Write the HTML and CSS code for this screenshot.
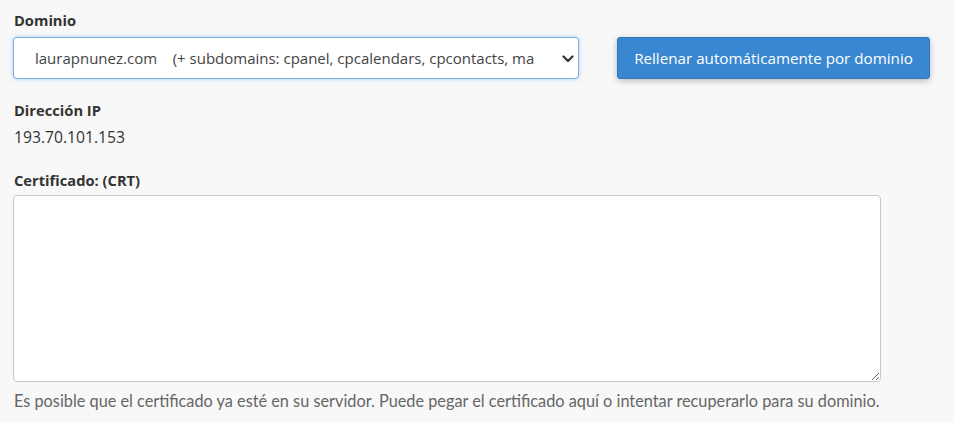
FILE: index.html
```html
<!DOCTYPE html>
<html lang="es">
<head>
<meta charset="utf-8">
<title>Instalar SSL</title>
<link rel="stylesheet" href="styles.css">
</head>
<body>
<form class="form">
  <div class="group">
    <label class="label" for="domain">Dominio</label>
    <div class="row">
      <div class="select-wrap">
        <select id="domain" class="select">
          <option>laurapnunez.com&nbsp;&nbsp;&nbsp;&nbsp;(+ subdomains: cpanel, cpcalendars, cpcontacts, mail, webdisk, webmail, www)</option>
        </select>
        <svg class="chevron" width="12" height="8" viewBox="0 0 12 8" aria-hidden="true"><path d="M1.5 1.5 L6 6 L10.5 1.5" fill="none" stroke="#333" stroke-width="2.2" stroke-linecap="round" stroke-linejoin="round"/></svg>
      </div>
      <button type="button" class="btn">Rellenar automáticamente por dominio</button>
    </div>
  </div>
  <div class="group ip">
    <div class="label">Dirección IP</div>
    <div class="value">193.70.101.153</div>
  </div>
  <div class="group crt">
    <label class="label" for="crt">Certificado: (CRT)</label>
    <textarea id="crt" class="textarea"></textarea>
    <p class="help">Es posible que el certificado ya esté en su servidor. Puede pegar el certificado aquí o intentar recuperarlo para su dominio.</p>
  </div>
</form>
</body>
</html>
```

FILE: styles.css
```css
html, body {
  margin: 0;
  padding: 0;
  background: #f8f8f8;
}
body {
  font-family: "Open Sans", "Liberation Sans", sans-serif;
  color: #333;
  font-size: 14px;
}
.form {
  padding: 10px 0 0 13px;
}
.label {
  display: block;
  font-weight: 700;
  font-size: 14.7px;
  line-height: 20px;
  color: #333;
  padding-left: 1px;
}
.row {
  display: flex;
  align-items: center;
  gap: 38px;
  margin-top: 7px;
}
.select-wrap {
  position: relative;
  width: 566px;
  height: 42px;
}
.select {
  appearance: none;
  -webkit-appearance: none;
  box-sizing: border-box;
  width: 100%;
  height: 100%;
  border: 1px solid #7aaee0;
  border-radius: 4px;
  background: #fff;
  box-shadow: 0 0 4px rgba(102, 175, 233, 0.55);
  font-family: "Open Sans", "Liberation Sans", sans-serif;
  font-size: 15px;
  color: #444;
  padding: 0 44px 0 21px;
  outline: none;
}
.chevron {
  position: absolute;
  right: 5px;
  top: 18px;
  pointer-events: none;
}
.btn {
  box-sizing: border-box;
  width: 313px;
  height: 42px;
  border: 1px solid #2f76bd;
  border-radius: 3px;
  background: #3a87d1;
  color: #fff;
  font-family: "Open Sans", "Liberation Sans", sans-serif;
  font-size: 15.2px;
  box-shadow: 0 2px 6px rgba(0, 0, 0, 0.25);
  padding: 0;
}
.ip {
  margin-top: 21px;
}
.value {
  margin-top: 7px;
  line-height: 20px;
  font-size: 15.7px;
  color: #333;
  padding-left: 1px;
}
.crt {
  margin-top: 23px;
}
.textarea {
  display: block;
  box-sizing: border-box;
  width: 868px;
  height: 187px;
  margin-top: 5px;
  border: 1px solid #c8c8c8;
  border-radius: 4px;
  background: #fff;
  resize: vertical;
}
.help {
  margin: 9px 0 0;
  padding-left: 1px;
  font-family: Lato, "Open Sans", sans-serif;
  font-size: 16.3px;
  line-height: 20px;
  color: #666;
}
```
